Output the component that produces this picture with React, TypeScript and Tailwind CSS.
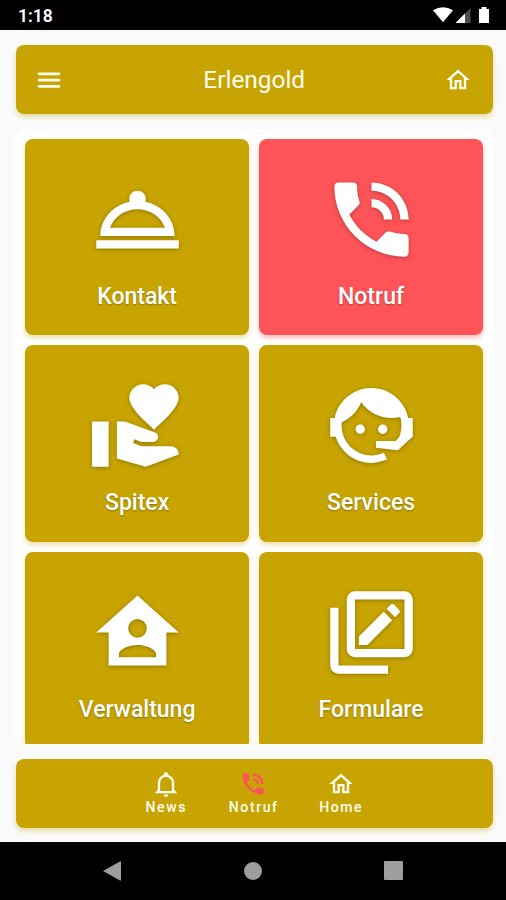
import React from "react";

const ICONS = {
  menu: "M4,5.9H20A1.1,1.1 0 0,1 20,8.1H4A1.1,1.1 0 0,1 4,5.9M4,10.9H20A1.1,1.1 0 0,1 20,13.1H4A1.1,1.1 0 0,1 4,10.9M4,15.9H20A1.1,1.1 0 0,1 20,18.1H4A1.1,1.1 0 0,1 4,15.9Z",
  home: "M12 5.69L17 10.19V18H15V12H9V18H7V10.19L12 5.69M12 3L2 12H5V20H11V14H13V20H19V12H22",
  bell: "M10 21H14C14 22.1 13.1 23 12 23S10 22.1 10 21M21 19V20H3V19L5 17V11C5 7.9 7 5.2 10 4.3V4C10 2.9 10.9 2 12 2S14 2.9 14 4V4.3C17 5.2 19 7.9 19 11V17L21 19M17 11C17 8.2 14.8 6 12 6S7 8.2 7 11V18H17V11Z",
  phone:
    "M15,12H17A5,5 0 0,0 12,7V9A3,3 0 0,1 15,12M19,12H21C21,7 16.97,3 12,3V5C15.86,5 19,8.13 19,12M20,15.5C18.75,15.5 17.55,15.3 16.43,14.93C16.08,14.82 15.69,14.9 15.41,15.18L13.21,17.38C10.38,15.94 8.06,13.62 6.62,10.79L8.82,8.59C9.1,8.31 9.18,7.92 9.07,7.57C8.7,6.45 8.5,5.25 8.5,4A1,1 0 0,0 7.5,3H4A1,1 0 0,0 3,4A17,17 0 0,0 20,21A1,1 0 0,0 21,20V16.5A1,1 0 0,0 20,15.5Z",
  service:
    "M12,5A2,2 0 0,1 14,7C14,7.24 13.96,7.47 13.88,7.69C17.95,8.5 21,11.91 21,16H3C3,11.91 6.05,8.5 10.12,7.69C10.04,7.47 10,7.24 10,7A2,2 0 0,1 12,5M22,19H2V17H22V19M12,9.5C8.89,9.5 6.25,11.39 5.34,14H18.66C17.75,11.39 15.11,9.5 12,9.5Z",
  care: "M20 17Q20.86 17 21.45 17.6T22 19L14 22L7 20V11H8.95L16.22 13.69Q17 14 17 14.81 17 15.28 16.66 15.63T15.8 16H13L11.25 15.33L10.92 16.27L13 17H20M16 3.23Q17.06 2 18.7 2 20.06 2 21 3T22 5.3Q22 6.33 21 7.76T19.03 10.15 16 13Q13.92 11.11 12.94 10.15T10.97 7.76 10 5.3Q10 3.94 10.97 3T13.31 2Q14.91 2 16 3.23M.984 11H5V22H.984V11Z",
  agent:
    "M18.72,14.76C19.07,13.91 19.26,13 19.26,12C19.26,11.28 19.15,10.59 18.96,9.95C18.31,10.1 17.63,10.18 16.92,10.18C13.86,10.18 11.15,8.67 9.5,6.34C8.61,8.5 6.91,10.26 4.77,11.22C4.73,11.47 4.73,11.74 4.73,12A7.27,7.27 0 0,0 12,19.27C13.05,19.27 14.06,19.04 14.97,18.63C15.54,19.72 15.8,20.26 15.78,20.26C14.14,20.81 12.87,21.08 12,21.08C9.58,21.08 7.27,20.13 5.57,18.42C4.53,17.38 3.76,16.11 3.33,14.73H2V10.18H3.09C3.93,6.04 7.6,2.92 12,2.92C14.4,2.92 16.71,3.87 18.42,5.58C19.69,6.84 20.54,8.45 20.89,10.18H22V14.73H21.94L18.38,18L13.08,17.4V15.73H17.91L18.72,14.76M9.27,11.77C9.57,11.77 9.86,11.89 10.07,12.11C10.28,12.32 10.4,12.61 10.4,12.91C10.4,13.21 10.28,13.5 10.07,13.71C9.86,13.92 9.57,14.04 9.27,14.04C8.64,14.04 8.13,13.54 8.13,12.91C8.13,12.28 8.64,11.77 9.27,11.77M14.72,11.77C15.35,11.77 15.85,12.28 15.85,12.91C15.85,13.54 15.35,14.04 14.72,14.04C14.09,14.04 13.58,13.54 13.58,12.91A1.14,1.14 0 0,1 14.72,11.77Z",
  admin:
    "M12,3L2,12H5V20H19V12H22L12,3M12,8.75A2.25,2.25 0 0,1 14.25,11A2.25,2.25 0 0,1 12,13.25A2.25,2.25 0 0,1 9.75,11A2.25,2.25 0 0,1 12,8.75M12,15C13.5,15 16.5,15.75 16.5,17.25V18H7.5V17.25C7.5,15.75 10.5,15 12,15Z",
  forms:
    "M20,16V4H8V16H20M20,2A2,2 0 0,1 22,4V16A2,2 0 0,1 20,18H8A2,2 0 0,1 6,16V4A2,2 0 0,1 8,2H20M16,20V22H4A2,2 0 0,1 2,20V6H4V20H16M8.95,12.95L14.95,6.95L17,9L11,15.05H8.95V12.95M18.72,7.28L17.7,8.3L15.65,6.25L16.68,5.23C16.89,5.02 17.22,5.02 17.43,5.23L18.72,6.52C18.93,6.73 18.93,7.07 18.72,7.28Z",
};

type IconName = keyof typeof ICONS;

function Icon({ name, className }: { name: IconName; className: string }) {
  return (
    <svg viewBox="0 0 24 24" fill="currentColor" fillRule="evenodd" className={className}>
      <path d={ICONS[name]} />
    </svg>
  );
}

const GOLD = "bg-[#c7a402] shadow-[0_3px_5px_rgba(199,164,2,0.35)]";
const RED = "bg-[#ff5457] shadow-[0_3px_5px_rgba(255,84,87,0.4)]";

const tiles: { label: string; icon: IconName; tone: string }[] = [
  { label: "Kontakt", icon: "service", tone: GOLD },
  { label: "Notruf", icon: "phone", tone: RED },
  { label: "Spitex", icon: "care", tone: GOLD },
  { label: "Services", icon: "agent", tone: GOLD },
  { label: "Verwaltung", icon: "admin", tone: GOLD },
  { label: "Formulare", icon: "forms", tone: GOLD },
];

const tabs: { label: string; icon: IconName; tone: string }[] = [
  { label: "News", icon: "bell", tone: "text-[#fffdf0]" },
  { label: "Notruf", icon: "phone", tone: "text-[#ff5457]" },
  { label: "Home", icon: "home", tone: "text-[#fffdf0]" },
];

export default function App() {
  return (
    <div className="flex h-[900px] w-[506px] flex-col overflow-hidden bg-[#fafafa] font-['Roboto',sans-serif]">
      <div className="flex h-[29.5px] shrink-0 items-center justify-between bg-black pr-[15px] pl-[18px] text-white">
        <span className="pt-[3px] text-[17.5px] leading-none font-semibold">1:18</span>
        <svg viewBox="0 0 58 20" className="h-5 w-[58px]" fill="#fff">
          <path d="M0 5.2Q10 -0.8 20 5.2L10 17.2Z" />
          <path d="M22.5 18L37.5 3V18Z" fill="#4d4d4d" />
          <path d="M22.5 18L32 8.5V18Z" />
          <path d="M46 4H48.5V2H53.5V4H56V18H46Z" />
        </svg>
      </div>

      <header
        className={`ml-[15.5px] mt-[15.5px] flex h-[69px] w-[477.5px] shrink-0 items-center justify-between rounded-[8px] pr-[19.5px] pl-[18.5px] text-[#fffdf0] ${GOLD}`}
      >
        <Icon name="menu" className="size-[30px]" />
        <h1 className="pt-[2px] text-[24.4px] leading-none">Erlengold</h1>
        <Icon name="home" className="mr-[1px] size-[28px]" />
      </header>

      <main className="ml-[15px] mt-[15px] h-[615px] w-[478px] shrink-0 overflow-hidden rounded-[9px] bg-white pr-[10px] pl-[10.2px] pt-[9.5px]">
        <div className="grid grid-cols-2 gap-[10px]">
          {tiles.map((t) => (
            <section
              key={t.label}
              className={`flex h-[196.7px] flex-col items-center rounded-[8px] pt-[31.3px] text-white ${t.tone}`}
            >
              <Icon
                name={t.icon}
                className="size-[99px] shrink-0 drop-shadow-[0_1px_2px_rgba(0,0,0,0.28)]"
              />
              <span className="mt-[14px] text-[23px] leading-[27px] font-medium text-shadow-[0_1px_2px_rgba(0,0,0,0.3)]">
                {t.label}
              </span>
            </section>
          ))}
        </div>
      </main>

      <nav
        className={`ml-[15.5px] mt-[15px] flex h-[69px] w-[477.5px] shrink-0 justify-center rounded-[8px] pt-[11px] ${GOLD}`}
      >
        {tabs.map((t) => (
          <div key={t.label} className="flex w-[87.5px] flex-col items-center">
            <Icon name={t.icon} className={`-ml-[2px] size-[28px] ${t.tone}`} />
            <span className="mt-px -ml-[1px] text-[14px] leading-[16px] font-medium tracking-[1.6px] text-[#fffdf0]">
              {t.label}
            </span>
          </div>
        ))}
      </nav>

      <div className="mt-auto grid h-[58.5px] shrink-0 grid-cols-[140px_140px_140px] items-center justify-center justify-items-center bg-black">
        <svg viewBox="0 0 18 20" className="mr-[2px] h-5 w-[18px]" fill="#9e9e9e">
          <path d="M0 10L17 0.5Q18 0 18 1V19Q18 20 17 19.5Z" />
        </svg>
        <span className="size-[18px] rounded-full bg-[#9e9e9e]" />
        <span className="size-[19px] rounded-[1px] bg-[#9e9e9e]" />
      </div>
    </div>
  );
}
